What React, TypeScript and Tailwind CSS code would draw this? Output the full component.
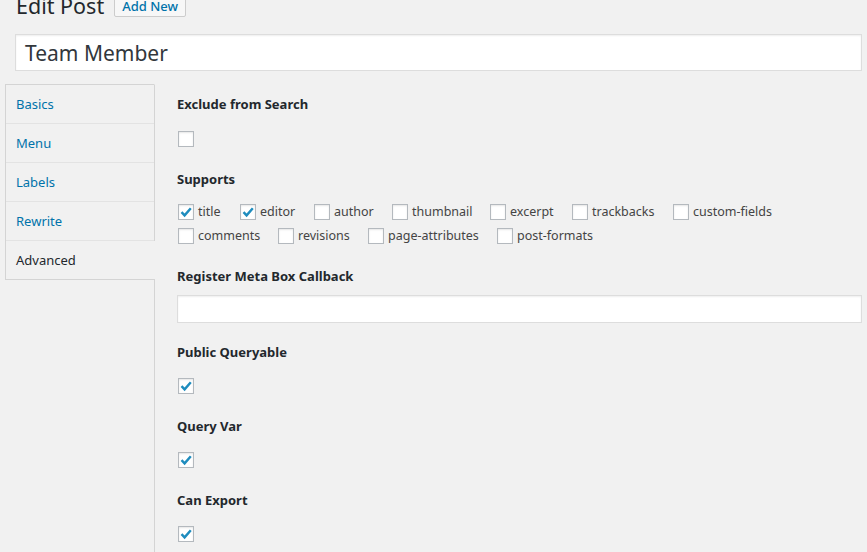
import React from "react";

const font = { fontFamily: '"Noto Sans", "Open Sans", sans-serif' };

function Check({ checked }: { checked?: boolean }) {
  return (
    <span className="flex h-4 w-4 shrink-0 items-center justify-center border border-[#b4b9be] bg-white shadow-[inset_0_1px_2px_rgba(0,0,0,0.1)]">
      {checked && (
        <svg width="14" height="14" viewBox="0 0 14 14">
          <path d="M2.5 7.2 L5.6 10.4 L11.8 3.2" fill="none" stroke="#1e8cbe" strokeWidth="2.4" strokeLinecap="butt" strokeLinejoin="miter" />
        </svg>
      )}
    </span>
  );
}

function Item({ label, checked, w }: { label: string; checked?: boolean; w: string }) {
  return (
    <label className={`flex h-6 items-center gap-[4px] ${w}`}>
      <Check checked={checked} />
      <span className="text-[12.5px] leading-6 text-[#444]">{label}</span>
    </label>
  );
}

function Heading({ children }: { children: React.ReactNode }) {
  return <div className="text-[13px] font-bold leading-5 text-[#23282d]">{children}</div>;
}

export default function App() {
  const tabs = ["Basics", "Menu", "Labels", "Rewrite"];
  return (
    <div style={font} className="h-[552px] w-[867px] overflow-hidden bg-[#f1f1f1] pr-[5px]">
      <div className="ml-[16px] mt-[-9px] flex items-center gap-[10px]">
        <h1 className="text-[21.5px] font-normal leading-[29px] text-[#23282d]">Edit Post</h1>
        <span className="mt-[1px] rounded-[2px] border border-[#ccc] bg-[#f7f7f7] px-[7px] text-[13px] font-medium leading-[20px] text-[#0073aa]">
          Add New
        </span>
      </div>
      <div className="ml-[15px] mt-[14px] flex h-[37px] items-center border border-[#ddd] bg-white px-[9px] pt-[2px] shadow-[inset_0_1px_2px_rgba(0,0,0,0.07)]">
        <span className="text-[21px] leading-none text-[#32373c]">Team Member</span>
      </div>
      <div className="ml-[5px] mt-[13px] flex">
        <div className="w-[149px] shrink-0">
          <div className="border-l border-t border-[#d4d4d4]">
            {tabs.map((t) => (
              <div key={t} className="flex h-[39px] items-center border-b border-[#e3e3e3] pl-[10px] pt-px text-[13px] text-[#0073aa]">
                {t}
              </div>
            ))}
          </div>
          <div className="relative z-10 -mr-px flex h-[39px] items-center border-b border-l border-[#d4d4d4] bg-[#f1f1f1] pl-[10px] pt-px text-[13px] text-[#23282d]">
            Advanced
          </div>
        </div>
        <div className="flex-1 border-l border-t border-[#d4d4d4] border-t-transparent pb-10 pl-[22px] pt-[9px]">
          <Heading>Exclude from Search</Heading>
          <div className="mt-[17px] pl-px">
            <Check />
          </div>
          <div className="mt-[22px]">
            <Heading>Supports</Heading>
          </div>
          <div className="mt-[11px] pl-px">
            <div className="flex">
              <Item label="title" checked w="w-[62px]" />
              <Item label="editor" checked w="w-[74px]" />
              <Item label="author" w="w-[78px]" />
              <Item label="thumbnail" w="w-[98px]" />
              <Item label="excerpt" w="w-[82px]" />
              <Item label="trackbacks" w="w-[101px]" />
              <Item label="custom-fields" w="" />
            </div>
            <div className="flex">
              <Item label="comments" w="w-[100px]" />
              <Item label="revisions" w="w-[90px]" />
              <Item label="page-attributes" w="w-[129px]" />
              <Item label="post-formats" w="" />
            </div>
          </div>
          <div className="mt-[18px]">
            <Heading>Register Meta Box Callback</Heading>
          </div>
          <div className="mt-[9px] h-[28px] border border-[#ddd] bg-white shadow-[inset_0_1px_2px_rgba(0,0,0,0.07)]" />
          <div className="mt-[19px]">
            <Heading>Public Queryable</Heading>
          </div>
          <div className="mt-[16px] pl-px">
            <Check checked />
          </div>
          <div className="mt-[22px]">
            <Heading>Query Var</Heading>
          </div>
          <div className="mt-[16px] pl-px">
            <Check checked />
          </div>
          <div className="mt-[22px]">
            <Heading>Can Export</Heading>
          </div>
          <div className="mt-[16px] pl-px">
            <Check checked />
          </div>
        </div>
      </div>
    </div>
  );
}
